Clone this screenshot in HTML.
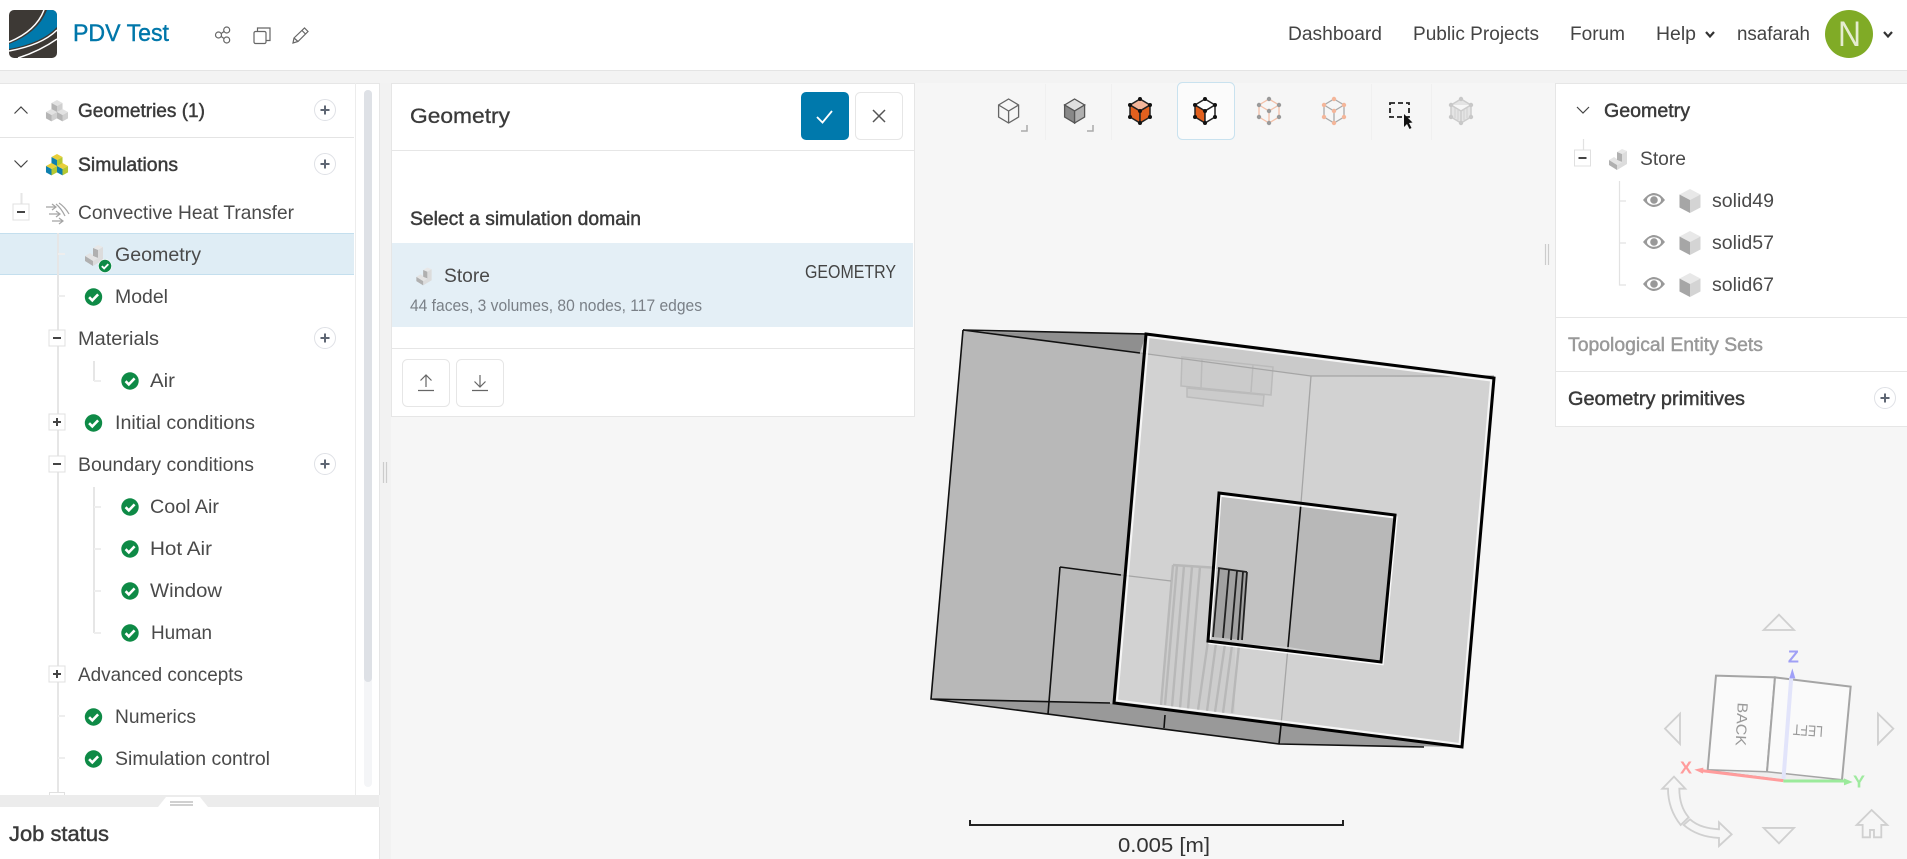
<!DOCTYPE html>
<html lang="en">
<head>
<meta charset="utf-8">
<title>PDV Test</title>
<style>
html,body{margin:0;padding:0;width:1907px;height:859px;overflow:hidden;background:#f6f6f6}
svg{display:block}
text{font-family:"Liberation Sans",sans-serif;font-size:19.5px;fill:#4a4a4a}
text:not(.v){transform:translateY(-.8px)}
.b{fill:#3a3a3a;stroke:#3a3a3a;stroke-width:.45px}
.bb{font-weight:700}
.nav{font-size:19px;fill:#444}
.tl{fill:none;stroke:#e6e6e6;stroke-width:2}
.tk{fill:none;stroke:#eeeeee;stroke-width:2}
.tn{fill:none;stroke:#e2e2e2;stroke-width:1.2}
.nv{fill:none;stroke:#d0d0d0;stroke-width:5.5;stroke-linejoin:miter}
</style>
</head>
<body>
<svg width="1907" height="859" viewBox="0 0 1907 859" xmlns="http://www.w3.org/2000/svg">
<defs>
  <g id="pc"><circle r="10.5" fill="#fff" stroke="#dfe1e6" stroke-width="1"/><path d="M-4.5 0H4.5M0-4.5V4.5" stroke="#5e6673" stroke-width="2" fill="none"/></g>
  <g id="ck"><circle r="8.7" fill="#0e8a46"/><path d="M-4.4 .2L-1.2 3.4L4.6-2.6" fill="none" stroke="#fff" stroke-width="2.6"/></g>
  <g id="bm"><rect x="-8" y="-8" width="16" height="16" fill="#fff" stroke="#e0e0e0" stroke-width="1"/><path d="M-4 0H4" stroke="#444" stroke-width="2"/></g>
  <g id="bp"><rect x="-8" y="-8" width="16" height="16" fill="#fff" stroke="#e0e0e0" stroke-width="1"/><path d="M-4 0H4M0-4V4" stroke="#444" stroke-width="2"/></g>
  <g id="st">
    <path d="M-1-7L4-10L9-8L4-5Z" fill="#e8e8e8"/>
    <path d="M-1-7L4-5V3L-1 1Z" fill="#b0b0b0"/>
    <path d="M4-5L9-8V5L-1 11V6L4 3Z" fill="#dcdcdc"/>
    <path d="M-9 1L-4-2L-1 0V1L4 3L-1 6Z" fill="#e4e4e4"/>
    <path d="M-9 1L-1 6V11L-9 6Z" fill="#b0b0b0"/>
  </g>
  <g id="cb">
    <path d="M0-7L6.5-3.5L0 0L-6.5-3.5Z" style="fill:var(--t)"/>
    <path d="M-6.5-3.5L0 0V7.5L-6.5 4Z" style="fill:var(--l)"/>
    <path d="M6.5-3.5L0 0V7.5L6.5 4Z" style="fill:var(--r)"/>
  </g>
  <g id="sd">
    <path d="M0-12L10.5-6.5L0-1L-10.5-6.5Z" fill="#e8e8e8"/>
    <path d="M-10.5-6.5L0-1V12L-10.5 6.5Z" fill="#a6a6a6"/>
    <path d="M10.5-6.5L0-1V12L10.5 6.5Z" fill="#d4d4d4"/>
  </g>
  <g id="ey">
    <path d="M-11 0Q0-14 11 0Q0 14-11 0Z" fill="#999"/>
    <ellipse rx="7" ry="4.8" fill="#fff"/>
    <circle r="3.8" fill="#999"/>
  </g>
</defs>

<!-- page background -->
<rect width="1907" height="859" fill="#f6f6f6"/>
<rect x="0" y="70" width="1907" height="13" fill="#f3f3f3"/>
<rect x="379" y="83" width="12" height="776" fill="#f2f2f2"/>

<!-- header -->
<rect width="1907" height="70" fill="#fff"/>
<rect y="70" width="1907" height="1" fill="#e4e4e4"/>
<clipPath id="lg"><rect x="9" y="10" width="48" height="48" rx="5"/></clipPath>
<g clip-path="url(#lg)">
  <rect x="9" y="10" width="48" height="48" fill="#3d3935"/>
  <path d="M47 10Q38 33 9 44V49Q42 43 57 27V10Z" fill="#0079ac"/>
  <path d="M44 10Q36 31 9 42M57 30Q42 45 9 51M57 39Q40 51 18 58" fill="none" stroke="#fff" stroke-width="1.5"/>
</g>
<text x="73" y="42" textLength="96" lengthAdjust="spacingAndGlyphs" style="font-size:24px;fill:#0077aa;stroke:#0077aa;stroke-width:.4px">PDV Test</text>
<g fill="none" stroke="#666" stroke-width="1.2">
  <circle cx="218.500" cy="35" r="3"/><circle cx="226.700" cy="30" r="3"/><circle cx="226.700" cy="40" r="3"/>
  <path d="M221.200 33.500L224 31.500M221.200 36.500L224 38.500"/>
  <rect x="254" y="31.500" width="12" height="12" rx="1.500"/><path d="M257.500 31.500V28H270V40.500H266"/>
  <path d="M293 43L294 38L304.500 28L308 31.500L298 41.500ZM302 30.500L305.500 34M294 38L298 41.500"/>
</g>
<g>
  <text x="1288" y="41" textLength="94" lengthAdjust="spacingAndGlyphs" class="nav">Dashboard</text>
  <text x="1413" y="41" textLength="126" lengthAdjust="spacingAndGlyphs" class="nav">Public Projects</text>
  <text x="1570" y="41" textLength="55" lengthAdjust="spacingAndGlyphs" class="nav">Forum</text>
  <text x="1656" y="41" textLength="40" lengthAdjust="spacingAndGlyphs" class="nav">Help</text>
  <text x="1737" y="41" textLength="73" lengthAdjust="spacingAndGlyphs" class="nav">nsafarah</text>
  <path d="M1706 32L1710 36.500L1714 32M1884 32L1888 36.500L1892 32" fill="none" stroke="#333" stroke-width="2.200"/>
  <circle cx="1849" cy="34" r="24" fill="#80ab26"/>
  <text x="1838" y="47" textLength="23" lengthAdjust="spacingAndGlyphs" style="font-size:35px;fill:#e5ecd0">N</text>
</g>

<!-- left panel -->
<rect x="0" y="83" width="379" height="712" fill="#fff"/>
<path d="M0 83.500H379.500V795" fill="none" stroke="#e6e6e6"/>
<rect x="355" y="83" width="1" height="712" fill="#ececec"/>
<rect x="364" y="90" width="8" height="697" rx="4" fill="#f4f5f7"/>
<rect x="364" y="90" width="8" height="592" rx="4" fill="#dee1e6"/>

<rect x="0" y="137" width="354" height="1" fill="#e4e4e4"/>
<path d="M14.500 113.500L21 107L27.500 113.500M14.500 160.500L21 167L27.500 160.500" fill="none" stroke="#444" stroke-width="1.200"/>
<g style="--t:#e2e2e2;--l:#b5b5b5;--r:#d0d0d0">
  <use href="#cb" transform="translate(57 106) scale(.85)"/><use href="#cb" transform="translate(51.500 115) scale(.85)"/><use href="#cb" transform="translate(62.500 115) scale(.85)"/>
</g>
<g style="--t:#e8cf3a;--l:#0d7fae;--r:#b5c832">
  <use href="#cb" transform="translate(57 160) scale(.85)"/><use href="#cb" transform="translate(51.500 169) scale(.85)"/><use href="#cb" transform="translate(62.500 169) scale(.85)"/>
</g>
<text x="78" y="118" textLength="127" lengthAdjust="spacingAndGlyphs" class="b">Geometries (1)</text>
<text x="78" y="172" textLength="100" lengthAdjust="spacingAndGlyphs" class="b">Simulations</text>
<use href="#pc" x="325" y="110"/><use href="#pc" x="325" y="164"/>

<path class="tl" d="M21.500 193V204"/>
<use href="#bm" x="21" y="212"/>
<g fill="none" stroke="#a5a5a5" stroke-width="1.200">
  <path d="M46 207H56M52 204L56 207L52 210M49 214H60M56 211L60 214L56 217M52 221H63M59 218L63 221L59 224"/>
  <path d="M59 203Q65 207 69 214M56 204Q61 208 65 216"/>
</g>
<text x="78" y="220" textLength="216" lengthAdjust="spacingAndGlyphs">Convective Heat Transfer</text>

<rect x="0" y="233" width="354" height="42" fill="#dfedf5"/>
<path d="M0 233.500H354M0 274.500H354" stroke="#c4dfee" fill="none"/>
<path class="tl" d="M58 233V795"/>
<path class="tk" d="M58 254H65M58 296H65M58 716H65M58 758H65"/>
<path class="tl" d="M94 361V381M94 487V633"/>
<path class="tk" d="M94 381H101M94 507H101M94 549H101M94 591H101M94 633H101"/>

<use href="#st" x="94" y="255"/>
<g transform="translate(105 266) scale(.72)"><circle r="9.500" fill="#fff"/><use href="#ck"/></g>
<text x="115" y="262" textLength="86" lengthAdjust="spacingAndGlyphs">Geometry</text>

<use href="#ck" x="93.500" y="297"/>
<text x="115" y="304" textLength="53" lengthAdjust="spacingAndGlyphs">Model</text>

<use href="#bm" x="57" y="338"/>
<text x="78" y="346" textLength="81" lengthAdjust="spacingAndGlyphs">Materials</text>
<use href="#pc" x="325" y="338"/>

<use href="#ck" x="130" y="381"/>
<text x="150" y="388" textLength="25" lengthAdjust="spacingAndGlyphs">Air</text>

<use href="#bp" x="57" y="422"/>
<use href="#ck" x="93.500" y="423"/>
<text x="115" y="430" textLength="140" lengthAdjust="spacingAndGlyphs">Initial conditions</text>

<use href="#bm" x="57" y="464"/>
<text x="78" y="472" textLength="176" lengthAdjust="spacingAndGlyphs">Boundary conditions</text>
<use href="#pc" x="325" y="464"/>

<use href="#ck" x="130" y="507"/>
<text x="150" y="514" textLength="69" lengthAdjust="spacingAndGlyphs">Cool Air</text>
<use href="#ck" x="130" y="549"/>
<text x="150" y="556" textLength="62" lengthAdjust="spacingAndGlyphs">Hot Air</text>
<use href="#ck" x="130" y="591"/>
<text x="150" y="598" textLength="72" lengthAdjust="spacingAndGlyphs">Window</text>
<use href="#ck" x="130" y="633"/>
<text x="151" y="640" textLength="61" lengthAdjust="spacingAndGlyphs">Human</text>

<use href="#bp" x="57" y="674"/>
<text x="78" y="682" textLength="165" lengthAdjust="spacingAndGlyphs">Advanced concepts</text>

<use href="#ck" x="93.500" y="717"/>
<text x="115" y="724" textLength="81" lengthAdjust="spacingAndGlyphs">Numerics</text>
<use href="#ck" x="93.500" y="759"/>
<text x="115" y="766" textLength="155" lengthAdjust="spacingAndGlyphs">Simulation control</text>
<rect x="49.500" y="792.500" width="15" height="3" fill="#fff" stroke="#e0e0e0"/>

<!-- job status -->
<rect x="0" y="795" width="379" height="12" fill="#ececec"/>
<path d="M158 807L166 797H200L208 807Z" fill="#fff"/>
<path d="M170 802H193M170 805H193" stroke="#b5b5b5" stroke-width="1.200"/>
<rect x="0" y="807" width="379" height="52" fill="#fff"/>
<rect x="379" y="807" width="1" height="52" fill="#e6e6e6"/>
<text x="9" y="842" textLength="100" lengthAdjust="spacingAndGlyphs" class="b" style="font-size:21px">Job status</text>
<path d="M383.500 462V483M386.500 462V483" stroke="#ccc" stroke-width="1.200"/>

<!-- geometry dialog -->
<rect x="391.500" y="83.500" width="523" height="333" fill="#fff" stroke="#e6e6e6"/>
<text x="410" y="124" textLength="100" lengthAdjust="spacingAndGlyphs" style="font-size:21.500px;fill:#3a3a3a;stroke:#3a3a3a;stroke-width:.3px">Geometry</text>
<rect x="392" y="150" width="522" height="1" fill="#e6e6e6"/>
<rect x="801" y="92" width="48" height="48" rx="5" fill="#0079ac"/>
<path d="M817 117L822.500 122.500L832 111" fill="none" stroke="#fff" stroke-width="1.800"/>
<rect x="855.500" y="92.500" width="47" height="47" rx="5" fill="#fff" stroke="#e6e6e6"/>
<path d="M873 110L885 122M885 110L873 122" stroke="#555" stroke-width="1.500"/>

<text x="410" y="226" textLength="231" lengthAdjust="spacingAndGlyphs" class="b" style="font-size:19px">Select a simulation domain</text>
<rect x="392" y="243" width="521" height="84" fill="#e4eff6"/>
<g transform="translate(424 276) scale(.85)"><use href="#st"/></g>
<text x="444" y="283" textLength="46" lengthAdjust="spacingAndGlyphs">Store</text>
<text x="805" y="279" textLength="91" lengthAdjust="spacingAndGlyphs" style="font-size:18px;fill:#444">GEOMETRY</text>
<text x="410" y="312" textLength="292" lengthAdjust="spacingAndGlyphs" style="font-size:17px;fill:#7a8087">44 faces, 3 volumes, 80 nodes, 117 edges</text>
<rect x="392" y="348" width="522" height="1" fill="#e6e6e6"/>
<rect x="402.500" y="359.500" width="47" height="47" rx="5" fill="#fff" stroke="#e6e6e6"/>
<rect x="456.500" y="359.500" width="47" height="47" rx="5" fill="#fff" stroke="#e6e6e6"/>
<path d="M418 390.500H434M426 387V375M420.500 380.500L426 375L431.500 380.500M472 390.500H488M480 375V387M474.500 381.500L480 387L485.500 381.500" fill="none" stroke="#666" stroke-width="1.200"/>

<!-- toolbar -->
<rect x="1177.500" y="82.500" width="57" height="57" rx="5" fill="#fbfbfb" stroke="#c9e2ef"/>
<path d="M1045.500 84V140M1111.500 84V140M1371.500 84V140M1431.500 84V140" stroke="#f0f0f0"/>
<path d="M1021 131H1027V125M1087 131H1093V125" fill="none" stroke="#aaa" stroke-width="1.500"/>
<g transform="translate(1008.600 111)" fill="none" stroke="#666" stroke-width="1.300">
  <path d="M0-12L10-6V6L0 12L-10 6V-6ZM-10-6L0 0L10-6M0 0V12"/>
</g>
<g transform="translate(1074.600 111)" stroke="#555" stroke-width="1.300">
  <path d="M0-12L10-6L0 0L-10-6Z" fill="#e0e0e0"/><path d="M-10-6L0 0V12L-10 6Z" fill="#888"/><path d="M10-6L0 0V12L10 6Z" fill="#b0b0b0"/>
</g>
<g transform="translate(1140 111)" stroke="#222" stroke-width="1.500">
  <path d="M0-12L10-6L0 0L-10-6Z" fill="#f4b69a"/><path d="M-10-6L0 0V12L-10 6Z" fill="#e2601e"/><path d="M10-6L0 0V12L10 6Z" fill="#e2601e"/>
  <g fill="#111" stroke="none"><circle cy="-12" r="2"/><circle cx="10" cy="-6" r="2"/><circle cx="10" cy="6" r="2"/><circle cy="12" r="2"/><circle cx="-10" cy="6" r="2"/><circle cx="-10" cy="-6" r="2"/><circle r="2"/></g>
</g>
<g transform="translate(1205 111)" stroke="#222" stroke-width="1.500">
  <path d="M0-12L10-6L0 0L-10-6Z" fill="#fff"/><path d="M-10-6L0 0V12L-10 6Z" fill="#e2601e"/><path d="M10-6L0 0V12L10 6Z" fill="#fff"/>
  <g fill="#111" stroke="none"><circle cy="-12" r="2"/><circle cx="10" cy="-6" r="2"/><circle cx="10" cy="6" r="2"/><circle cy="12" r="2"/><circle cx="-10" cy="6" r="2"/><circle cx="-10" cy="-6" r="2"/><circle r="2"/></g>
</g>
<g transform="translate(1269 111)">
  <path d="M0-12L10-6V6L0 12L-10 6V-6ZM-10-6L0 0L10-6M0 0V12" fill="none" stroke="#f4c0a8" stroke-width="1.300"/>
  <g fill="#9a9a9a"><circle cy="-12" r="2.200"/><circle cx="10" cy="-6" r="2.200"/><circle cx="10" cy="6" r="2.200"/><circle cy="12" r="2.200"/><circle cx="-10" cy="6" r="2.200"/><circle cx="-10" cy="-6" r="2.200"/><circle r="2.200"/></g>
</g>
<g transform="translate(1334 111)">
  <path d="M0-12L10-6V6L0 12L-10 6V-6ZM-10-6L0 0L10-6M0 0V12" fill="none" stroke="#aaa" stroke-width="1.300"/>
  <g fill="#f4b69a"><circle cy="-12" r="2.200"/><circle cx="10" cy="-6" r="2.200"/><circle cx="10" cy="6" r="2.200"/><circle cy="12" r="2.200"/><circle cx="-10" cy="6" r="2.200"/><circle cx="-10" cy="-6" r="2.200"/><circle r="2.200"/></g>
</g>
<rect x="1390" y="103" width="19" height="14" fill="none" stroke="#222" stroke-width="1.800" stroke-dasharray="5 3"/>
<path d="M1404 114V127L1407 124L1409.500 129L1411.500 128L1409 123L1412.500 122.500Z" fill="#111"/>
<g transform="translate(1461 111)">
  <path d="M0-12L10-6V6L0 12L-10 6V-6ZM-10-6L0 0L10-6M0 0V12" fill="#e4e4e4" stroke="#ccc" stroke-width="1.500"/>
  <path d="M-6-3V7M-3-2V9M3-2V9M6-3V7" stroke="#d0d0d0"/>
  <g fill="#c8c8c8"><circle cy="-12" r="2.200"/><circle cx="10" cy="-6" r="2.200"/><circle cx="10" cy="6" r="2.200"/><circle cy="12" r="2.200"/><circle cx="-10" cy="6" r="2.200"/><circle cx="-10" cy="-6" r="2.200"/></g>
</g>

<!-- right panel -->
<rect x="1555.500" y="83.500" width="352" height="343" fill="#fff" stroke="#e6e6e6"/>
<path d="M1577 107L1583 113L1589 107" fill="none" stroke="#444" stroke-width="1.200"/>
<text x="1604" y="118" textLength="86" lengthAdjust="spacingAndGlyphs" class="b">Geometry</text>
<path class="tn" d="M1583.500 139V151"/>
<use href="#bm" x="1582.500" y="158"/>
<use href="#st" x="1618" y="159"/>
<text x="1640" y="166" textLength="46" lengthAdjust="spacingAndGlyphs">Store</text>
<path class="tn" d="M1619.500 181V285H1626M1619.500 201H1626M1619.500 243H1626"/>
<use href="#ey" x="1654" y="200"/><use href="#sd" x="1690" y="201"/>
<text x="1712" y="208" textLength="62" lengthAdjust="spacingAndGlyphs">solid49</text>
<use href="#ey" x="1654" y="242"/><use href="#sd" x="1690" y="243"/>
<text x="1712" y="250" textLength="62" lengthAdjust="spacingAndGlyphs">solid57</text>
<use href="#ey" x="1654" y="284"/><use href="#sd" x="1690" y="285"/>
<text x="1712" y="292" textLength="62" lengthAdjust="spacingAndGlyphs">solid67</text>
<rect x="1556" y="317" width="351" height="1" fill="#e6e6e6"/>
<text x="1568" y="352" textLength="195" lengthAdjust="spacingAndGlyphs" class="b" style="fill:#999;stroke:#999">Topological Entity Sets</text>
<rect x="1556" y="371" width="351" height="1" fill="#e6e6e6"/>
<text x="1568" y="406" textLength="177" lengthAdjust="spacingAndGlyphs" class="b">Geometry primitives</text>
<use href="#pc" x="1885" y="398"/>
<path d="M1545.500 244V265M1548.500 244V265" stroke="#ccc" stroke-width="1.200"/>

<!-- 3D model -->
<g>
  <path d="M963 330L1146 334L1114 703L931 699Z" fill="#b8b8b8"/>
  <path d="M984 332L1146 334L1140 353Z" fill="#8f8f8f"/>
  <path d="M931 699L1110 703L1462 747L1279 744Z" fill="#999"/>
  <path d="M1146 334L1494 378L1462 747L1114 703Z" fill="#d2d2d2"/>
  <path d="M1146 334L1494 378L1311 376L1140 353Z" fill="#cacaca"/>
  <path d="M1219 493L1301 503L1288 647L1208 641Z" fill="#c2c2c2"/>
  <path d="M1301 503L1395 515L1381 662L1288 647Z" fill="#b8b8b8"/>

  <!-- AC unit -->
  <g fill="#cbcbcb" stroke="#bbb" stroke-width="1.500">
    <path d="M1187 388L1264 395L1263 406L1187 397Z"/>
    <path d="M1182 357L1273 367L1271 395L1181 386Z"/>
    <path d="M1202 359L1201 388M1253 365L1251 392" fill="none"/>
  </g>
  <!-- cylinder -->
  <path d="M1173 565L1219 568L1208 641L1235 646L1235 713L1161 705Z" fill="#cdcdcd"/>
  <path d="M1218 568L1247 572L1242 640L1213 637Z" fill="#a2a2a2"/>
  <g stroke="#b8b8b8" stroke-width="2.400" fill="none">
    <path d="M1173 565L1161 705M1177 566L1165 705M1184 566L1172 707M1192 567L1180 708M1200 567L1188 709M1208 641L1198 710M1216 643L1207 711M1225 644L1215 712M1232 645L1223 713M1239 645L1232 713"/>
    <path d="M1173 565L1219 568"/>
  </g>
  <g stroke="#222" stroke-width="1.800" fill="none">
    <path d="M1219 569L1213 637M1229 570L1223 638M1237 571L1231 640M1243 572L1238 640M1247 572L1242 640M1218 568L1247 572"/>
  </g>

  <!-- thin edges -->
  <g fill="none" stroke="#111" stroke-width="1.600">
    <path d="M963 330L931 699L1110 703M931 699L1279 744L1424 747M963 330L1146 334M963 330L1140 353"/>
    <path d="M1060 567L1048 714M1060 567L1121 575M1165 715L1164 728M1301 503L1288 647M1281 725L1279 744"/>
  </g>
  <g fill="none" stroke="#a5a5a5" stroke-width="1.300">
    <path d="M1140 353L1311 376L1494 376M1311 376L1301 503M1288 647L1281 725M1121 575L1171 581"/>
  </g>

  <!-- bold outlines with halo -->
  <path d="M1148.500 337L1491 380.500L1459.500 744L1117 700.500Z" fill="none" stroke="#fff" stroke-width="2" opacity=".8"/>
  <path d="M1146 334L1494 378L1462 747L1114 703Z" fill="none" stroke="#000" stroke-width="3"/>
  <path d="M1220.500 495.500L1396.500 517.500L1382.500 664L1209.500 643Z" fill="none" stroke="#fff" stroke-width="2.400" opacity=".9"/>
  <path d="M1219 493L1395 515L1381 662L1208 641Z" fill="none" stroke="#000" stroke-width="3"/>
</g>

<!-- scale bar -->
<path d="M970 820V825H1343V820" fill="none" stroke="#222" stroke-width="2"/>
<text x="1118" y="853" textLength="92" lengthAdjust="spacingAndGlyphs" style="font-size:20px;fill:#333">0.005 [m]</text>

<!-- view cube -->
<g transform="translate(1640 600) scale(.3333)">
  <path class="nv" d="M371 90L417 44L462 90Z"/>
  <path class="nv" d="M371 684H462L417 730Z"/>
  <path class="nv" d="M120 341L75 386L120 432Z"/>
  <path class="nv" d="M714 341L760 386L714 432Z"/>
  <path class="nv" d="M102 530L67 566H84C84 610 98 645 122 675L146 652C127 630 118 600 118 566H136Z"/>
  <path class="nv" d="M131 675C160 700 195 712 237 714V738L275 703L237 667V688C205 686 175 680 150 658Z"/>
  <path class="nv" d="M695 630L650 675H668V712H690V690H702V712H724V675H742Z"/>
  <path d="M228 227L405 232L381 516L203 510Z" fill="#fafafa" stroke="#a5a5a5" stroke-width="6"/>
  <path d="M405 232L632 260L606 540L381 516Z" fill="#fafafa" stroke="#a5a5a5" stroke-width="6"/>
  <path d="M203 510L381 516L606 540L430 540Z" fill="#eee" stroke="#a5a5a5" stroke-width="3"/>
  <text class="v" transform="translate(290 372) rotate(93)" text-anchor="middle" textLength="130" lengthAdjust="spacingAndGlyphs" style="font-size:44px;fill:#999">BACK</text>
  <text class="v" transform="translate(505 376) rotate(184)" text-anchor="middle" textLength="90" lengthAdjust="spacingAndGlyphs" style="font-size:46px;fill:#999">LEFT</text>
  <path d="M430 542L454 230" stroke="#e2e4fa" stroke-width="12" fill="none"/>
  <path d="M448 235L457 205L466 235Z" fill="#a0a0f8"/>
  <path d="M430 542L185 512" stroke="#ff9c9c" stroke-width="9" fill="none"/>
  <path d="M190 503L163 509L189 521Z" fill="#ff9c9c"/>
  <path d="M430 543H615" stroke="#9bea9b" stroke-width="9" fill="none"/>
  <path d="M612 535L638 546L612 556Z" fill="#9bea9b"/>
  <text x="460" y="187" text-anchor="middle" class="v bb" style="font-size:54px;fill:#a0a0f5">Z</text>
  <text x="138" y="520" text-anchor="middle" class="v bb" style="font-size:54px;fill:#ff9c9c">X</text>
  <text x="657" y="563" text-anchor="middle" class="v bb" style="font-size:54px;fill:#9fea9f">Y</text>
</g>
</svg>
</body>
</html>
